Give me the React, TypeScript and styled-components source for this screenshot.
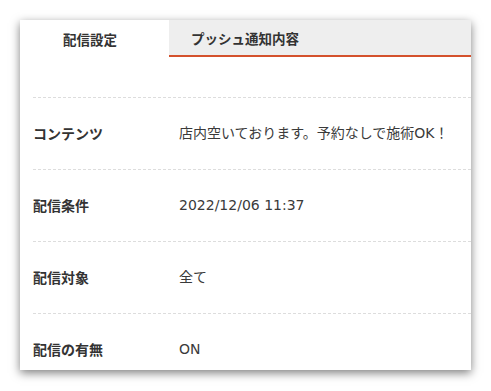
import styled, { createGlobalStyle } from "styled-components";

type RowType = {
  label: string;
  value: string;
};

const ROW_LIST: RowType[] = [
  { label: "コンテンツ", value: "店内空いております。予約なしで施術OK！" },
  { label: "配信条件", value: "2022/12/06 11:37" },
  { label: "配信対象", value: "全て" },
  { label: "配信の有無", value: "ON" },
];

const TAB_LIST = ["配信設定", "プッシュ通知内容"];

const GlobalStyle = createGlobalStyle`
  html, body {
    margin: 0;
    padding: 0;
    background: #ffffff;
  }
  body {
    font-family: "Noto Sans CJK JP", "Noto Sans", sans-serif;
    color: #333333;
  }
`;

const App = () => {
  return (
    <StPage>
      <GlobalStyle />
      <StCard>
        <StTabs>
          {TAB_LIST.map((tab, idx) => (
            <StTab key={tab} active={idx === 0}>
              {tab}
            </StTab>
          ))}
        </StTabs>
        <StList>
          {ROW_LIST.map((row) => (
            <StRow key={row.label}>
              <StLabel>{row.label}</StLabel>
              <StValue>{row.value}</StValue>
            </StRow>
          ))}
        </StList>
      </StCard>
    </StPage>
  );
};

export default App;

const StPage = styled.div`
  padding: 20px;
  width: 451px;
`;

const StCard = styled.div`
  width: 451px;
  height: 350px;
  overflow: hidden;
  background: #ffffff;
  box-shadow: 0 3px 9px rgba(0, 0, 0, 0.5);
`;

const StTabs = styled.div`
  display: flex;
  height: 37px;
`;

const StTab = styled.div<{ active: boolean }>`
  display: flex;
  align-items: center;
  box-sizing: border-box;
  height: 37px;
  font-size: 13.5px;
  font-weight: 700;
  color: #333333;
  ${({ active }) =>
    active
      ? `
    width: 149px;
    padding-left: 43px;
    background: #ffffff;
  `
      : `
    flex: 1;
    padding-left: 22px;
    background: #eeeeee;
    border-bottom: 2px solid #d4512c;
  `}
`;

const StList = styled.div`
  display: flex;
  flex-direction: column;
  padding: 40px 0 0 13px;
`;

const StRow = styled.div`
  display: flex;
  align-items: center;
  height: 72px;
  box-sizing: border-box;
  padding-bottom: 1px;
  border-top: 1px dashed #dddddd;
  font-size: 14px;
  line-height: 21px;
`;

const StLabel = styled.div`
  width: 146px;
  flex-shrink: 0;
  font-weight: 700;
  color: #333333;
`;

const StValue = styled.div`
  font-family: "DejaVu Sans", "Noto Sans CJK JP", sans-serif;
  color: #3a3a3a;
`;
